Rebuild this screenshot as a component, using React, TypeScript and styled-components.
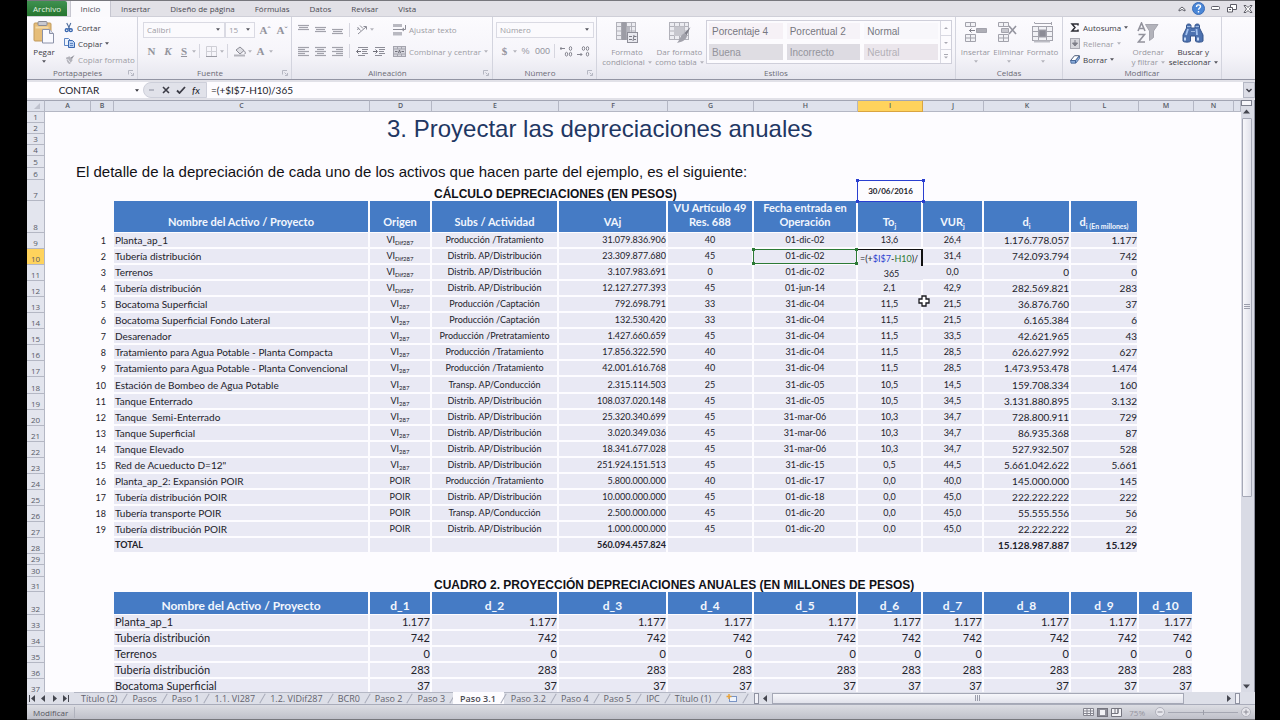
import React from "react";
import styled, { createGlobalStyle, css } from "styled-components";

const UI = `"Open Sans", "Noto Sans", sans-serif`;
const CALC = `Lato, "Open Sans", sans-serif`;
const ARIAL = `"Liberation Sans", Arial, sans-serif`;
const INK = "#22222a";
const MUTED = "#9c9ca4";
const LINE = "#b4b7c4";

const Global = createGlobalStyle`
  *, *::before, *::after { box-sizing: border-box; }
  body { margin: 0; background: #000; font-family: ${UI}; font-size: 8px; color: ${INK}; }
  button, input, select { font: inherit; color: inherit; margin: 0; padding: 0; border: 0; background: none; border-radius: 0; outline: none; }
  svg { display: block; flex: none; }
`;

const Frame = styled.div`
  display: flex;
  flex-direction: column;
  height: 100vh;
  margin: 0 25px 0 27px;
  background: #e1e1e8;
  border-top: 1px solid #77777d;
  border-bottom: 1px solid #77777d;
  overflow: hidden;
`;

/* ---------- ribbon tabs ---------- */

const TabStrip = styled.nav`
  display: flex;
  align-items: stretch;
  height: 16px;
  flex: none;
  background: #e2e1e7;
  border-bottom: 1px solid #cfcfd8;
`;

const RibbonTab = styled.button<{ $kind?: "file" | "active" }>`
  padding: 0 10px;
  color: #4a4a52;
  line-height: 14px;
  ${(p) =>
    p.$kind === "file" &&
    css`
      padding: 0 5px;
      margin-right: 3px;
      min-width: 40px;
      color: #e3f3e0;
      background: linear-gradient(#3f9150, #26752f);
      border-radius: 0 2px 0 0;
    `}
  ${(p) =>
    p.$kind === "active" &&
    css`
      background: #fbfafd;
      border: 1px solid #c6c6d0;
      border-width: 0 1px;
      margin-bottom: -1px;
      min-width: 41px;
      padding: 0 9px 1px;
    `}
`;

const WindowButtons = styled.div`
  display: flex;
  align-items: center;
  gap: 6px;
  margin-left: auto;
  padding-right: 2px;
`;

const PlainButton = styled.button`
  display: flex;
  align-items: center;
  justify-content: center;
`;

/* ---------- ribbon ---------- */

const Ribbon = styled.div`
  display: flex;
  flex: none;
  height: 63px;
  background: linear-gradient(#fcfbfe, #f6f5fa 60%, #e6e6ee);
  border-bottom: 1px solid #9294a3;
`;

const Group = styled.section<{ $w: number }>`
  display: flex;
  flex-direction: column;
  flex: 0 0 ${(p) => p.$w}px;
  padding-top: 2px;
  border-right: 1px solid #d3d4de;
`;

const GroupBody = styled.div<{ $pad?: number }>`
  display: flex;
  height: 48px;
  padding-left: ${(p) => p.$pad ?? 4}px;
`;

const GroupLabel = styled.div`
  display: flex;
  align-items: center;
  height: 11px;
  color: #6b6b75;
  span { flex: 1; text-align: center; }
  svg { margin-right: 3px; }
`;

const Stack = styled.div<{ $pad?: number }>`
  display: flex;
  flex-direction: column;
  padding-left: ${(p) => p.$pad ?? 0}px;
`;

const SmallButton = styled.button<{ $off?: boolean }>`
  display: flex;
  align-items: center;
  gap: 3px;
  height: 16px;
  white-space: nowrap;
  color: ${(p) => (p.$off ? MUTED : "#3c3c44")};
`;

const BigButton = styled.button<{ $w: number; $off?: boolean }>`
  display: flex;
  flex-direction: column;
  align-items: center;
  width: ${(p) => p.$w}px;
  padding-top: 2px;
  line-height: 10px;
  white-space: nowrap;
  color: ${(p) => (p.$off ? "#97979f" : "#3c3c44")};
`;

const IconSlot = styled.span`
  display: flex;
  align-items: center;
  height: 26px;
  padding-bottom: 3px;
`;

const Inline = styled.span`
  display: flex;
  align-items: center;
  justify-content: center;
  gap: 3px;
  min-height: 9px;
`;

const ToolRow = styled.div`
  display: flex;
  align-items: center;
  height: 21px;
  & + & { height: 22px; }
`;

const ToolButton = styled.button<{ $w?: number; $sans?: boolean }>`
  display: flex;
  align-items: center;
  justify-content: center;
  width: ${(p) => p.$w ?? 17}px;
  height: 16px;
  color: #94949d;
  font-family: ${(p) => (p.$sans ? ARIAL : `"Liberation Serif", serif`)};
  font-size: ${(p) => (p.$sans ? 9 : 11)}px;
  font-weight: ${(p) => (p.$sans ? 400 : 700)};
`;

const VRule = styled.i`
  width: 1px;
  height: 14px;
  margin: 0 3px;
  background: #d6d6df;
`;

const SelectBox = styled.label<{ $w: number }>`
  display: flex;
  align-items: center;
  width: ${(p) => p.$w}px;
  height: 16px;
  padding: 0 4px 0 3px;
  border: 1px solid #dadae3;
  background: #fbfafd;
  color: ${MUTED};
  select { appearance: none; flex: 1; min-width: 0; }
`;

const Gallery = styled.div`
  display: flex;
  width: 246px;
  height: 44px;
  margin-top: 1px;
  border: 1px solid #cfcfda;
  background: #fcfbfe;
`;

const Swatches = styled.div`
  display: grid;
  flex: 1;
  grid-template-columns: repeat(3, 1fr);
  grid-auto-rows: 16px;
  gap: 5px 4px;
  padding: 2px;
`;

const Swatch = styled.button<{ $bg: string; $fg: string }>`
  padding-left: 3px;
  text-align: left;
  font-family: ${ARIAL};
  font-size: 10px;
  background: ${(p) => p.$bg};
  color: ${(p) => p.$fg};
`;

const GalleryScroll = styled.div`
  display: grid;
  width: 11px;
  grid-template-rows: repeat(3, 1fr);
  border-left: 1px solid #d9d9e2;
  button + button { border-top: 1px solid #d9d9e2; }
`;

/* ---------- formula bar ---------- */

const FormulaBar = styled.div`
  display: flex;
  flex: none;
  height: 16px;
  margin: 2px 0;
  background: #fdfcff;
  font-family: ${CALC};
  font-size: 10px;
`;

const NameBox = styled.label`
  display: flex;
  align-items: center;
  width: 112px;
  input { flex: 1; min-width: 0; text-align: center; padding-right: 4px; }
`;

const FormulaTools = styled.div`
  display: flex;
  align-items: center;
  gap: 6px;
  width: 64px;
  margin-left: 4px;
  padding-left: 4px;
  background: #e1e2ea;
  border: 1px solid #cdcfda;
  border-radius: 8px 0 0 8px;
`;

const FormulaInput = styled.input`
  flex: 1;
  min-width: 0;
  padding-left: 4px;
`;

const Expand = styled(PlainButton)`
  width: 12px;
  background: #dcdde6;
  border: 1px solid ${LINE};
`;

/* ---------- sheet ---------- */

const Workbook = styled.div`
  display: flex;
  flex: 1;
  min-height: 0;
  background: #fdfcff;
`;

const SheetView = styled.div`
  flex: 1;
  min-width: 0;
  overflow: hidden;
`;

const Grid = styled.table`
  width: 100%;
  table-layout: fixed;
  border-collapse: separate;
  border-spacing: 0;
  font-family: ${CALC};
  font-size: 10px;
  td, th { padding: 0; white-space: nowrap; }
`;

const ColHead = styled.th<{ $on?: boolean }>`
  height: 12px;
  font-family: ${UI};
  font-size: 7px;
  font-weight: 600;
  line-height: 10px;
  color: #565a66;
  background: ${(p) => (p.$on ? "#ffd35c" : "#dfe2ec")};
  border-right: 1px solid ${(p) => (p.$on ? "#d9a441" : LINE)};
  border-top: 1px solid #a2a5b3;
  border-bottom: 1px solid ${(p) => (p.$on ? "#d9a441" : LINE)};
`;

const RowHead = styled.th<{ $on?: boolean }>`
  vertical-align: bottom;
  font-family: ${UI};
  font-size: 8px;
  font-weight: 400;
  line-height: 10px;
  color: #565a66;
  background: ${(p) => (p.$on ? "#ffd35c" : "#e3e5ee")};
  border-right: 1px solid ${LINE};
  border-bottom: 1px solid ${LINE};
`;

const Row = styled.tr<{ $h: number }>`
  height: ${(p) => p.$h}px;
`;

const TitleCell = styled.td`
  padding-left: 17px !important;
  font-family: ${ARIAL};
  font-size: 24px;
  line-height: 30px;
  color: #1f3763;
`;

const IntroCell = styled.td`
  padding-left: 31px !important;
  vertical-align: bottom;
  font-family: ${ARIAL};
  font-size: 15px;
  line-height: 16px;
  color: #111116;
`;

const CaptionCell = styled.td`
  padding-left: 2px !important;
  vertical-align: bottom;
  font-family: ${ARIAL};
  font-size: 12px;
  font-weight: 700;
  line-height: 14px;
  color: #111116;
`;

const HeadCell = styled.th<{ $big?: boolean }>`
  vertical-align: bottom;
  padding-bottom: ${(p) => (p.$big ? 1 : 3)}px !important;
  font-size: ${(p) => (p.$big ? 12 : 11)}px;
  font-weight: 700;
  line-height: 14px;
  color: #f2f6fd;
  background: #457bc5;
  border-right: 2px solid #fdfcff;
  border-bottom: 1px solid #fdfcff;
  sub { font-size: 7px; line-height: 0; }
`;

const Cell = styled.td<{ $a?: "left" | "center" | "right"; $s?: boolean; $b?: boolean; $pos?: boolean; $lg?: boolean }>`
  text-align: ${(p) => p.$a ?? "left"};
  font-size: ${(p) => (p.$s ? 9 : p.$lg ? 11 : 10)}px;
  font-weight: ${(p) => (p.$b ? 700 : 400)};
  line-height: 14px;
  background: #e9e9f4;
  border-right: 2px solid #fdfcff;
  border-bottom: 2px solid #fdfcff;
  ${(p) => (p.$a ?? "left") === "left" && "padding-left: 1px !important;"}
  ${(p) => p.$pos && "position: relative;"}
  sub { font-size: 6px; line-height: 0; vertical-align: -2px; }
`;

const IndexCell = styled.td`
  padding-right: 8px !important;
  text-align: right;
  font-size: 9px;
  line-height: 14px;
`;

const DateCell = styled.td`
  position: relative;
  text-align: center;
  font-size: 8px;
  font-weight: 700;
  line-height: 14px;
`;

const RangeBox = styled.i<{ $c: string }>`
  position: absolute;
  inset: 0 -1px -1px -1px;
  border: 1px solid ${(p) => p.$c};
  &::before, &::after {
    content: "";
    position: absolute;
    top: -2px;
    bottom: -2px;
    width: 3px;
    background:
      linear-gradient(${(p) => p.$c}, ${(p) => p.$c}) top / 3px 3px no-repeat,
      linear-gradient(${(p) => p.$c}, ${(p) => p.$c}) bottom / 3px 3px no-repeat;
  }
  &::before { left: -2px; }
  &::after { right: -2px; }
`;

const CellEditor = styled.div`
  position: absolute;
  z-index: 1;
  inset: 0 -2px auto 0;
  height: 31px;
  padding: 2px 0 0 2px;
  text-align: left;
  line-height: 15px;
  color: ${INK};
  background:
    linear-gradient(#111, #111) top right / 2px 17px no-repeat,
    linear-gradient(#111, #111) top / 100% 1px no-repeat,
    #e9e9f4;
  b { font-weight: 400; color: #2a3fd0; }
  em { font-style: normal; color: #2c7a35; }
  span { display: block; text-align: center; }
`;

const Pointer = styled.svg`
  position: absolute;
  z-index: 2;
  left: -5px;
  top: -2px;
`;

/* ---------- scroll bars ---------- */

const VScroll = styled.div`
  display: flex;
  flex-direction: column;
  align-items: center;
  width: 14px;
  padding-right: 2px;
  background: #d9dbe5;
  border-right: 1px solid #8f92a1;
`;

const SplitBox = styled.i`
  width: 11px;
  height: 6px;
  border: 1px solid #7c7f8e;
  background: #f6f6fb;
`;

const VThumb = styled.div`
  display: flex;
  align-items: center;
  justify-content: center;
  width: 10px;
  height: 64%;
  margin-bottom: auto;
  background: linear-gradient(90deg, #f7f7fb, #e1e2eb);
  border: 1px solid #a5a8b6;
  border-radius: 1px;
`;

const Bottom = styled.div`
  display: flex;
  flex: none;
  height: 13px;
  background: #dddfe8;
  border-bottom: 1px solid #a9acba;
`;

const SheetNav = styled.div`
  display: flex;
  align-items: center;
  width: 47px;
  button { width: 11px; }
`;

const SheetTab = styled.button<{ $on?: boolean }>`
  position: relative;
  display: flex;
  align-items: center;
  padding: 0 8px 0 7px;
  font-size: 9px;
  line-height: 11px;
  white-space: nowrap;
  color: #63636d;
  border-top: 1px solid ${LINE};
  ${(p) => p.$on && "background: #fdfcff; font-weight: 600; color: #4a4a52; border-top-color: #fdfcff;"}
  &::after {
    content: "";
    position: absolute;
    right: 0;
    top: 0;
    width: 1px;
    height: 11px;
    background: #a9acba;
    transform: rotate(30deg);
  }
`;

const HScroll = styled.div`
  display: flex;
  flex: 1;
  align-items: center;
  margin-left: 8px;
  padding-right: 15px;
`;

const HTrack = styled.div`
  flex: 1;
  margin: 0 2px 0 0;
`;

const HThumb = styled.div`
  display: flex;
  align-items: center;
  justify-content: center;
  width: 92%;
  height: 11px;
  background: linear-gradient(#f7f7fb, #e1e2eb);
  border: 1px solid #a5a8b6;
`;

const HSplit = styled.i`
  width: 5px;
  height: 11px;
  border: 1px solid #8f92a1;
  background: #f2f2f8;
`;

const Status = styled.footer`
  display: flex;
  align-items: center;
  flex: none;
  height: 14px;
  padding: 0 4px 0 6px;
  color: #55555f;
  background: linear-gradient(#dcdde3, #bfc0c9);
`;

const StatusRule = styled.i`
  width: 1px;
  height: 11px;
  margin-left: 6px;
  background: #b0b2bd;
`;

const StatusTools = styled.div`
  display: flex;
  align-items: center;
  gap: 3px;
  margin-left: auto;
  color: #94949e;
  label { display: flex; margin: 0 7px 0 4px; }
`;

const Zoom = styled.input`
  appearance: none;
  width: 70px;
  height: 9px;
  background:
    linear-gradient(#9b9da8, #9b9da8) center / 1px 5px no-repeat,
    linear-gradient(#a5a7b2, #a5a7b2) center / 100% 1px no-repeat;
  &::-webkit-slider-thumb { appearance: none; width: 1px; height: 1px; }
`;

/* ---------- icons ---------- */

const Caret = ({ c = "#55555d" }: { c?: string }) => (
  <svg width="4" height="3" viewBox="0 0 5 3"><path d="M0 0h5L2.5 3z" fill={c} /></svg>
);
const Arrow = ({ d, w = 7, h = 7 }: { d: string; w?: number; h?: number }) => (
  <svg width={w} height={h} viewBox="0 0 7 7"><path d={d} fill="#44464f" /></svg>
);
const Launcher = () => (
  <svg width="6" height="6" viewBox="0 0 6 6" fill="none" stroke="#b5b7c2" strokeWidth="1"><path d="M.5 4.500V.5H5M2.500 2.500l2 2M5.500 3v2.500H3" /></svg>
);
const PasteIcon = () => (
  <svg width="22" height="23" viewBox="0 0 22 23">
    <rect x="1" y="2" width="17" height="18" rx="1" fill="#e6bd79" stroke="#c19a5c" />
    <rect x="5" y=".5" width="9" height="4" rx="1" fill="#c9c9d0" stroke="#8b8b95" />
    <path d="M2.500 6.500h13" stroke="#f4d9a5" strokeWidth="2" />
    <path d="M9.500 8.500h7l4 4v9.500h-11z" fill="#fafaff" stroke="#8c92a8" />
    <path d="M16.500 8.500v4h4" fill="#d9dce8" stroke="#8c92a8" />
  </svg>
);
const CutIcon = () => (
  <svg width="10" height="11" viewBox="0 0 11 11" fill="none" stroke="#3a68b0">
    <path d="M3 .5l3.500 7M7.500 .5L4.500 7.500" strokeWidth="1.200" stroke="#4f6e9e" /><circle cx="3" cy="8.500" r="1.600" strokeWidth="1.500" /><circle cx="7.500" cy="8.500" r="1.600" strokeWidth="1.500" />
  </svg>
);
const CopyIcon = () => (
  <svg width="11" height="10" viewBox="0 0 11 10">
    <path d="M.5.5h4l2 2v5h-6z" fill="#eef3fc" stroke="#5e86c4" /><path d="M4.500 2.500h4l2 2v5h-6z" fill="#b9d0f2" stroke="#3a68b0" /><path d="M6 5.500h3M6 7.500h3" stroke="#5e86c4" />
  </svg>
);
const BrushIcon = () => (
  <svg width="11" height="11" viewBox="0 0 12 11"><path d="M11.500.5L7 3.500l1.500 1.800z" fill="#8b8b94" /><path d="M2 3.500l4-1.500 3.500 4-3 4.500c-2-.5-3-2-3.500-4z" fill="#b4b4bc" /><path d="M4 5l3 4M.5 5.500h2.500" stroke="#ececf2" /></svg>
);
const Lines = ({ rows, y = 0 }: { rows: [number, number][]; y?: number }) => (
  <svg width="11" height="11" viewBox="0 0 11 11" fill="none" stroke="#a2a2ab">
    {rows.map(([x, w], i) => <path key={i} d={`M${x} ${y + 1.5 + i * 2}h${w}`} strokeWidth="1.200" />)}
  </svg>
);
const V3: [number, number][] = [[0, 11], [1, 9], [0, 11]];
const BordersIcon = () => (
  <svg width="11" height="11" viewBox="0 0 11 11" fill="none" stroke="#cfcfd6"><path d="M.5.5h10v10H.5zM5.500.5v10M.5 5.500h10" /><path d="M0 10.500h11" stroke="#9a9aa3" /></svg>
);
const BucketIcon = () => (
  <svg width="12" height="11" viewBox="0 0 12 11"><path d="M2 4l4-3 4 3.500-4 3.500z" fill="#dedee4" stroke="#8d8d97" /><path d="M9.500 4.500c2 1 2 2 1.500 3.500" stroke="#8d8d97" fill="none" /><path d="M0 9.500h11" stroke="#b4b4bc" strokeWidth="2" /></svg>
);
const OrientIcon = () => (
  <svg width="12" height="11" viewBox="0 0 12 11" fill="none" stroke="#8d8d97"><path d="M2 10L10 3M7.500 2.500H10.500V5.500" /><path d="M1.500 3l3 3.500M4 1.500l3 3M1 5.500l2-1" /></svg>
);
const IndentIcon = ({ flip }: { flip?: boolean }) => (
  <svg width="12" height="11" viewBox="0 0 12 11" fill="none" stroke="#8d8d97"><path d="M2 1.500h10M6 3.500h6M6 5.500h5M6 7.500h6M2 9.500h7" /><path d={flip ? "M0 5.500h4M2.500 3.500l2 2-2 2" : "M1 5.500h4M2.500 3.500l-2 2 2 2"} stroke="#6f6f79" /></svg>
);
const WrapIcon = () => (
  <svg width="13" height="12" viewBox="0 0 13 12"><path d="M0 0h9v3H0zM0 8h9v3.500H0z" fill="#b9b9c1" /><path d="M0 5.500h10M12.500 1v4.500h-3M11 4l-2 1.500L11 7" fill="none" stroke="#8d8d97" /></svg>
);
const MergeIcon = () => (
  <svg width="13" height="11" viewBox="0 0 13 11"><rect x=".5" y=".5" width="12" height="10" fill="#d6d6dd" stroke="#a4a4ae" /><path d="M1 3h11M1 8h11M4.500 0v3M8.500 0v3M4.500 8v3M8.500 8v3" stroke="#a4a4ae" /><path d="M2 5.500h2.500M8.500 5.500H11M5.500 7l1-3 1 3" stroke="#6f6f79" fill="none" /></svg>
);
const DecimalIcon = ({ out }: { out?: boolean }) => (
  <svg width="13" height="11" viewBox="0 0 13 11" fill="none" stroke="#85858f">
    <ellipse cx="10.500" cy="2.500" rx="1.200" ry="1.900" /><ellipse cx={out ? 10.5 : 6.5} cy="8.200" rx="1.200" ry="1.900" />
    {out ? <ellipse cx="6.500" cy="2.500" rx="1.200" ry="1.900" /> : <ellipse cx="10.500" cy="8.200" rx="1.200" ry="1.900" />}
    <path d={out ? "M0 8.500h5M3.500 7l1.500 1.500L3.500 10" : "M0 2.500h5M1.500 1L0 2.500 1.500 4"} />
  </svg>
);
const TableIcon = ({ brush }: { brush?: boolean }) => (
  <svg width="22" height="22" viewBox="0 0 22 22">
    <rect x=".5" y=".5" width="19" height="17" fill="#ececf1" stroke="#b2b2ba" />
    <path d="M5.500 0v18M10.500 0v18M15.500 0v18M0 4.500h20M0 9H20M0 13.500h20" stroke="#b2b2ba" />
    {brush ? (
      <><path d="M5 4.500h10.500V14H5z" fill="#c6c6cd" /><path d="M21.500 5l-6 6 2 2.500z" fill="#7f7f89" /><path d="M15.500 11l2.500 3c-1 4-5 6-10 7 3-3 3-8 7.500-10z" fill="#a2a2ab" /></>
    ) : (
      <><path d="M5.500 0h5v18h-5z" fill="#9c9ca5" /><path d="M10.500 5h3.500v8h-3.500z" fill="#b8b8c0" /><rect x="11.500" y="10.500" width="10" height="10" fill="#e9e9ef" stroke="#8f8f99" /><path d="M13 14.500h3M13 17.500h3M18 13l-1 6M18 14.500h2.500M18 17.500h2" stroke="#7a7a84" /></>
    )}
  </svg>
);
const CellsIcon = ({ kind }: { kind: "in" | "del" | "fmt" }) => (
  <svg width="24" height="21" viewBox="0 0 24 21" fill="#f2f2f6" stroke="#a3a3ac">
    {kind === "fmt" ? (
      <><path d="M3.500 1v-1M3.500 1.500h17M20.500 0v3" fill="none" /><rect x="1.500" y="4.500" width="20" height="14" /><path d="M1 9.500h21M1 14.500h21M7.500 4v15M15.500 4v15" /><path d="M8 8h7v7H8z" fill="#8c8c96" /><path d="M3 19.500h16" strokeWidth="2" stroke="#bcbcc4" /></>
    ) : (
      <><path d="M1.500.5h10v4h-10zM1.500 12.500h10v7h-10zM6.500.5v4M6.500 12.500v7M1.500 16h10" />
        {kind === "in" ? <><path d="M12.500 6.500h10v4h-10z" fill="#aeaeb6" /><path d="M5 8.500h6M7.500 6.500l-2 2 2 2" stroke="#7f7f89" fill="none" /></> : <><path d="M4.500 6.500h7v4h-7z" fill="#c6c6cd" /><path d="M12 4l7 8M19 4l-7 8" stroke="#94949e" strokeWidth="1.600" /></>}</>
    )}
  </svg>
);
const SigmaIcon = () => (
  <svg width="10" height="9" viewBox="0 0 10 9"><path d="M8 2.500V1H2L5 4.500 2 8h6V6.500" fill="none" stroke="#2c2c34" strokeWidth="1.500" /></svg>
);
const FillIcon = () => (
  <svg width="10" height="11" viewBox="0 0 10 11"><rect x=".5" y=".5" width="9" height="10" fill="#d6d6dc" stroke="#a9a9b2" /><path d="M5 2v5M2.500 5L5 8l2.500-3z" stroke="#7f7f89" fill="#7f7f89" /></svg>
);
const EraserIcon = () => (
  <svg width="10" height="9" viewBox="0 0 10 9"><path d="M.6 5.500L4.500.7h4.900L5.500 5.500z" fill="#fff" stroke="#4a5a78" /><path d="M.6 5.500h4.900v2.700H1zM5.500 5.500l4-4.500v2.500L6 8H5.500z" fill="#88abd9" stroke="#3f5f94" strokeWidth=".8" /></svg>
);
const SortIcon = () => (
  <svg width="22" height="22" viewBox="0 0 22 22" fill="none" stroke="#92929c" strokeWidth="1.600">
    <path d="M8.500 2.500h12.500l-4.500 6.500v6.500l-4 3V9z" fill="#b3b3bb" stroke="#a5a5ae" strokeWidth="1" />
    <path d="M1 9L4.500 1l3.500 8M2.300 6.500h4.400" /><path d="M1.500 12.500h6l-6 7.500h6.500" />
  </svg>
);
const BinocularsIcon = () => (
  <svg width="22" height="20" viewBox="0 0 22 20">
    <path d="M4.500 2.500C4.500.5 9 .5 9 2.500V5h4V2.500c0-2 4.500-2 4.500 0V5l3.500 7v6c0 1.500-7.500 1.500-7.500 0v-5h-5v5c0 1.500-7.500 1.500-7.500 0v-6L4.500 5z" fill="#4d72b0" stroke="#34548c" />
    <path d="M4 12l2-6M14.500 6l.5 6" stroke="#a4c2ee" strokeWidth="1.800" fill="none" />
    <path d="M3 14.500v3M16 14.500v3" stroke="#c3d7f4" strokeWidth="2" />
    <path d="M5 3.500h3.500M13.500 3.500H17M9 8.500h4" stroke="#9db8e0" />
  </svg>
);
const Grip = ({ v }: { v?: boolean }) => (
  <svg width="6" height="6" viewBox="0 0 6 6" stroke="#9a9dab"><path d={v ? "M0 .5h6M0 2.500h6M0 4.500h6" : "M.5 0v6M2.500 0v6M4.500 0v6"} /></svg>
);

/* ---------- data ---------- */

const COLS: [string, number][] = [
  ["A", 46], ["B", 23], ["C", 256], ["D", 62], ["E", 127], ["F", 109], ["G", 86],
  ["H", 104], ["I", 65], ["J", 61], ["K", 87], ["L", 68], ["M", 55], ["N", 40],
];

const DIF = "Dif287";
const VI = "287";
const TR = "Producción /Tratamiento";
const DD = "Distrib. AP/Distribución";
const CA = "Producción /Captación";

const ASSETS: string[][] = [
  ["Planta_ap_1", DIF, TR, "31.079.836.906", "40", "01-dic-02", "13,6", "26,4", "1.176.778.057", "1.177"],
  ["Tubería distribución", DIF, DD, "23.309.877.680", "45", "01-dic-02", "", "31,4", "742.093.794", "742"],
  ["Terrenos", DIF, DD, "3.107.983.691", "0", "01-dic-02", "", "0,0", "0", "0"],
  ["Tubería distribución", DIF, DD, "12.127.277.393", "45", "01-jun-14", "2,1", "42,9", "282.569.821", "283"],
  ["Bocatoma Superficial", VI, CA, "792.698.791", "33", "31-dic-04", "11,5", "21,5", "36.876.760", "37"],
  ["Bocatoma Superficial Fondo Lateral", VI, CA, "132.530.420", "33", "31-dic-04", "11,5", "21,5", "6.165.384", "6"],
  ["Desarenador", VI, "Producción /Pretratamiento", "1.427.660.659", "45", "31-dic-04", "11,5", "33,5", "42.621.965", "43"],
  ["Tratamiento para Agua Potable - Planta Compacta", VI, TR, "17.856.322.590", "40", "31-dic-04", "11,5", "28,5", "626.627.992", "627"],
  ["Tratamiento para Agua Potable - Planta Convencional", VI, TR, "42.001.616.768", "40", "31-dic-04", "11,5", "28,5", "1.473.953.478", "1.474"],
  ["Estación de Bombeo de Agua Potable", VI, "Transp. AP/Conducción", "2.315.114.503", "25", "31-dic-05", "10,5", "14,5", "159.708.334", "160"],
  ["Tanque Enterrado", VI, DD, "108.037.020.148", "45", "31-dic-05", "10,5", "34,5", "3.131.880.895", "3.132"],
  ["Tanque \u00a0Semi-Enterrado", VI, DD, "25.320.340.699", "45", "31-mar-06", "10,3", "34,7", "728.800.911", "729"],
  ["Tanque Superficial", VI, DD, "3.020.349.036", "45", "31-mar-06", "10,3", "34,7", "86.935.368", "87"],
  ["Tanque Elevado", VI, DD, "18.341.677.028", "45", "31-mar-06", "10,3", "34,7", "527.932.507", "528"],
  ["Red de Acueducto D=12\"", VI, DD, "251.924.151.513", "45", "31-dic-15", "0,5", "44,5", "5.661.042.622", "5.661"],
  ["Planta_ap_2: Expansión POIR", "", TR, "5.800.000.000", "40", "01-dic-17", "0,0", "40,0", "145.000.000", "145"],
  ["Tubería distribución POIR", "", DD, "10.000.000.000", "45", "01-dic-18", "0,0", "45,0", "222.222.222", "222"],
  ["Tubería transporte POIR", "", "Transp. AP/Conducción", "2.500.000.000", "45", "01-dic-20", "0,0", "45,0", "55.555.556", "56"],
  ["Tubería distribución POIR", "", DD, "1.000.000.000", "45", "01-dic-20", "0,0", "45,0", "22.222.222", "22"],
];

const YEARS = Array.from({ length: 10 }, (_, i) => `d_${i + 1}`);
const PROJECTION: [string, string][] = [
  ["Planta_ap_1", "1.177"], ["Tubería distribución", "742"], ["Terrenos", "0"],
  ["Tubería distribución", "283"], ["Bocatoma Superficial", "37"],
];

const SHEETS = ["Título (2)", "Pasos", "Paso 1", "1.1. VI287", "1.2. VIDif287", "BCR0", "Paso 2", "Paso 3", "Paso 3.1", "Paso 3.2", "Paso 4", "Paso 5", "IPC", "Título (1)"];

/* ---------- parts ---------- */

const Label = ({ children, launch }: { children: string; launch?: boolean }) => (
  <GroupLabel><span>{children}</span>{launch && <Launcher />}</GroupLabel>
);

const Big = ({ w, off, icon, lines }: { w: number; off?: boolean; icon: React.ReactNode; lines: string[] }) => (
  <BigButton $w={w} $off={off}>
    <IconSlot>{icon}</IconSlot>
    <span>{lines[0]}</span>
    <Inline>{lines[1]}<Caret c={off ? "#b4b4bc" : undefined} /></Inline>
  </BigButton>
);

function RibbonBar() {
  return (
    <Ribbon>
      <Group $w={111}>
        <GroupBody $pad={2}>
          <Big w={30} icon={<PasteIcon />} lines={["Pegar", ""]} />
          <Stack $pad={5}>
            <SmallButton><CutIcon />Cortar</SmallButton>
            <SmallButton><CopyIcon />Copiar <Caret /></SmallButton>
            <SmallButton $off><BrushIcon />Copiar formato</SmallButton>
          </Stack>
        </GroupBody>
        <Label launch>Portapapeles</Label>
      </Group>

      <Group $w={154}>
        <GroupBody $pad={5}>
          <Stack>
            <ToolRow>
              <SelectBox $w={82}><select aria-label="Fuente"><option>Calibri</option></select><Caret /></SelectBox>
              <SelectBox $w={30}><select aria-label="Tamaño"><option>15</option></select><Caret /></SelectBox>
              <ToolButton $w={20}>A<sup>ˆ</sup></ToolButton>
              <ToolButton $w={14}>A<sup>ˇ</sup></ToolButton>
            </ToolRow>
            <ToolRow>
              <ToolButton>N</ToolButton>
              <ToolButton $w={16}><i>K</i></ToolButton>
              <ToolButton $w={16}><u>S</u></ToolButton>
              <Caret c="#b4b4bc" /><VRule />
              <ToolButton><BordersIcon /></ToolButton>
              <Caret c="#b4b4bc" /><VRule />
              <ToolButton><BucketIcon /></ToolButton>
              <Caret c="#b4b4bc" />
              <ToolButton>A</ToolButton>
              <Caret c="#b4b4bc" />
            </ToolRow>
          </Stack>
        </GroupBody>
        <Label launch>Fuente</Label>
      </Group>

      <Group $w={201}>
        <GroupBody $pad={3}>
          <Stack>
            <ToolRow>
              <ToolButton><Lines rows={V3} /></ToolButton>
              <ToolButton><Lines rows={V3} y={2} /></ToolButton>
              <ToolButton><Lines rows={V3} y={4} /></ToolButton>
              <VRule />
              <ToolButton><OrientIcon /></ToolButton>
              <Caret c="#b4b4bc" />
            </ToolRow>
            <ToolRow>
              <ToolButton><Lines rows={[[0, 11], [0, 7], [0, 11], [0, 7], [0, 11]]} /></ToolButton>
              <ToolButton><Lines rows={[[0, 11], [2, 7], [0, 11], [2, 7], [0, 11]]} /></ToolButton>
              <ToolButton><Lines rows={[[0, 11], [4, 7], [0, 11], [4, 7], [0, 11]]} /></ToolButton>
              <VRule />
              <ToolButton><IndentIcon /></ToolButton>
              <ToolButton><IndentIcon flip /></ToolButton>
            </ToolRow>
          </Stack>
          <Stack $pad={6}>
            <ToolRow><SmallButton $off><WrapIcon />Ajustar texto</SmallButton></ToolRow>
            <ToolRow><SmallButton $off><MergeIcon />Combinar y centrar <Caret c="#b4b4bc" /></SmallButton></ToolRow>
          </Stack>
        </GroupBody>
        <Label launch>Alineación</Label>
      </Group>

      <Group $w={104}>
        <GroupBody $pad={3}>
          <Stack>
            <ToolRow><SelectBox $w={98}><select aria-label="Formato de número"><option>Número</option></select><Caret /></SelectBox></ToolRow>
            <ToolRow>
              <ToolButton>$</ToolButton>
              <Caret c="#b4b4bc" />
              <ToolButton $sans>%</ToolButton>
              <ToolButton $sans>000</ToolButton>
              <VRule />
              <ToolButton><DecimalIcon /></ToolButton>
              <ToolButton><DecimalIcon out /></ToolButton>
            </ToolRow>
          </Stack>
        </GroupBody>
        <Label launch>Número</Label>
      </Group>

      <Group $w={359}>
        <GroupBody $pad={4}>
          <Big w={52} off icon={<TableIcon />} lines={["Formato", "condicional"]} />
          <Big w={53} off icon={<TableIcon brush />} lines={["Dar formato", "como tabla"]} />
          <Gallery>
            <Swatches>
              <Swatch $bg="#f6f1f6" $fg="#77777f">Porcentaje 4</Swatch>
              <Swatch $bg="#f6f3f8" $fg="#77777f">Porcentual 2</Swatch>
              <Swatch $bg="#f8f7fb" $fg="#77777f">Normal</Swatch>
              <Swatch $bg="#dfdde3" $fg="#94949c">Buena</Swatch>
              <Swatch $bg="#dddbe2" $fg="#94949c">Incorrecto</Swatch>
              <Swatch $bg="#ebe6ec" $fg="#b3b0b7">Neutral</Swatch>
            </Swatches>
            <GalleryScroll>
              <PlainButton aria-label="Anterior"><svg width="4" height="2" viewBox="0 0 4 2"><path d="M0 2h4L2 0z" fill="#a9a9b2" /></svg></PlainButton>
              <PlainButton aria-label="Siguiente"><svg width="4" height="2" viewBox="0 0 4 2"><path d="M0 0h4L2 2z" fill="#a9a9b2" /></svg></PlainButton>
              <PlainButton aria-label="Más"><svg width="4" height="5" viewBox="0 0 4 5"><path d="M0 0h4v1H0zM0 2.500h4L2 4.500z" fill="#a9a9b2" /></svg></PlainButton>
            </GalleryScroll>
          </Gallery>
        </GroupBody>
        <Label>Estilos</Label>
      </Group>

      <Group $w={107}>
        <GroupBody $pad={3}>
          <Big w={33} off icon={<CellsIcon kind="in" />} lines={["Insertar", ""]} />
          <Big w={33} off icon={<CellsIcon kind="del" />} lines={["Eliminar", ""]} />
          <Big w={35} off icon={<CellsIcon kind="fmt" />} lines={["Formato", ""]} />
        </GroupBody>
        <Label>Celdas</Label>
      </Group>

      <Group $w={159}>
        <GroupBody $pad={7}>
          <Stack>
            <SmallButton><SigmaIcon />Autosuma <Caret /></SmallButton>
            <SmallButton $off><FillIcon />Rellenar <Caret c="#b4b4bc" /></SmallButton>
            <SmallButton><EraserIcon />Borrar <Caret /></SmallButton>
          </Stack>
          <Big w={40} off icon={<SortIcon />} lines={["Ordenar", "y filtrar"]} />
          <Big w={50} icon={<BinocularsIcon />} lines={["Buscar y", "seleccionar"]} />
        </GroupBody>
        <Label>Modificar</Label>
      </Group>
    </Ribbon>
  );
}

const RowNo = ({ n }: { n: number }) => <RowHead scope="row" $on={n === 10}>{n}</RowHead>;

function AssetRow({ row, index }: { row: string[]; index: number }) {
  const [name, vi, sub, vaj, vu, date, to, vur, d, dm] = row;
  const n = index + 9;
  return (
    <Row $h={n === 18 ? 17 : 16}>
      <RowNo n={n} />
      <td />
      <IndexCell>{index + 1}</IndexCell>
      <Cell>{name}</Cell>
      <Cell $a="center" $s>{vi ? <>VI<sub>{vi}</sub></> : "POIR"}</Cell>
      <Cell $a="center" $s>{sub}</Cell>
      <Cell $a="right" $s>{vaj}</Cell>
      <Cell $a="center" $s>{vu}</Cell>
      <Cell $a="center" $s $pos={n === 10}>{date}{n === 10 && <RangeBox $c="#2c7a35" />}</Cell>
      <Cell $a="center" $s $pos={n === 10}>
        {to}
        {n === 10 && (
          <CellEditor role="textbox" aria-label="I10">
            =(+<b>$I$7</b>-<em>H10</em>)/<span>365</span>
          </CellEditor>
        )}
      </Cell>
      <Cell $a="center" $s $pos={n === 13}>
        {vur}
        {n === 13 && (
          <Pointer width="12" height="12" viewBox="0 0 12 12">
            <path d="M4 1h4v3h3v4H8v3H4V8H1V4h3z" fill="#fff" stroke="#1a1a1f" strokeWidth="1.300" />
          </Pointer>
        )}
      </Cell>
      <Cell $a="right">{d}</Cell>
      <Cell $a="right">{dm}</Cell>
    </Row>
  );
}

function Sheet() {
  return (
    <Grid>
      <colgroup>
        <col style={{ width: 18 }} />
        {COLS.map(([c, w]) => <col key={c} style={{ width: w }} />)}
        <col />
      </colgroup>
      <thead>
        <tr>
          <ColHead><svg width="15" height="8" viewBox="0 0 15 8"><path d="M13 1v6H7z" fill="#bfc2ce" /></svg></ColHead>
          {COLS.map(([c]) => <ColHead key={c} scope="col" $on={c === "I"}>{c}</ColHead>)}
          <ColHead />
        </tr>
      </thead>
      <tbody>
        <Row $h={11}><RowNo n={1} /><td colSpan={3} rowSpan={3} /><TitleCell colSpan={8} rowSpan={3}>3. Proyectar las depreciaciones anuales</TitleCell></Row>
        <Row $h={11}><RowNo n={2} /></Row>
        <Row $h={11}><RowNo n={3} /></Row>
        <Row $h={11}><RowNo n={4} /></Row>
        <Row $h={12}><RowNo n={5} /><IntroCell colSpan={14} rowSpan={2}>El detalle de la depreciación de cada uno de los activos que hacen parte del ejemplo, es el siguiente:</IntroCell></Row>
        <Row $h={12}><RowNo n={6} /></Row>
        <Row $h={21}>
          <RowNo n={7} /><td colSpan={4} />
          <CaptionCell colSpan={4}>CÁLCULO DEPRECIACIONES (EN PESOS)</CaptionCell>
          <DateCell>30/06/2016<RangeBox $c="#2a3fd0" /></DateCell>
        </Row>
        <Row $h={32}>
          <RowNo n={8} /><td colSpan={2} />
          <HeadCell>Nombre del Activo / Proyecto</HeadCell>
          <HeadCell>Origen</HeadCell>
          <HeadCell>Subs / Actividad</HeadCell>
          <HeadCell>VAj</HeadCell>
          <HeadCell>VU Artículo 49<br />Res. 688</HeadCell>
          <HeadCell>Fecha entrada en<br />Operación</HeadCell>
          <HeadCell>To<sub>j</sub></HeadCell>
          <HeadCell>VUR<sub>j</sub></HeadCell>
          <HeadCell>d<sub>i</sub></HeadCell>
          <HeadCell>d<sub>i (En millones)</sub></HeadCell>
        </Row>
        {ASSETS.map((row, i) => <AssetRow key={i} row={row} index={i} />)}
        <Row $h={16}>
          <RowNo n={28} /><td colSpan={2} />
          <Cell $b $s>TOTAL</Cell><Cell /><Cell />
          <Cell $a="right" $b $s>560.094.457.824</Cell>
          <Cell /><Cell /><Cell /><Cell />
          <Cell $a="right" $b>15.128.987.887</Cell>
          <Cell $a="right" $b>15.129</Cell>
        </Row>
        <Row $h={11}><RowNo n={29} /></Row>
        <Row $h={12}><RowNo n={30} /></Row>
        <Row $h={15}><RowNo n={31} /><td colSpan={4} /><CaptionCell colSpan={7}>CUADRO 2. PROYECCIÓN DEPRECIACIONES ANUALES (EN MILLONES DE PESOS)</CaptionCell></Row>
        <Row $h={23}>
          <RowNo n={32} /><td colSpan={2} />
          <HeadCell $big>Nombre del Activo / Proyecto</HeadCell>
          {YEARS.map((y) => <HeadCell key={y} $big>{y}</HeadCell>)}
        </Row>
        {PROJECTION.map(([name, value], i) => (
          <Row key={i} $h={16}>
            <RowNo n={33 + i} /><td colSpan={2} />
            <Cell $lg>{name}</Cell>
            {YEARS.map((y) => <Cell key={y} $a="right" $lg>{value}</Cell>)}
          </Row>
        ))}
      </tbody>
    </Grid>
  );
}

export default function App() {
  return (
    <Frame>
      <Global />
      <TabStrip>
        <RibbonTab $kind="file">Archivo</RibbonTab>
        <RibbonTab $kind="active">Inicio</RibbonTab>
        {["Insertar", "Diseño de página", "Fórmulas", "Datos", "Revisar", "Vista"].map((t) => <RibbonTab key={t}>{t}</RibbonTab>)}
        <WindowButtons>
          <PlainButton aria-label="Minimizar cinta"><svg width="8" height="6" viewBox="0 0 8 6"><path d="M1 5V3.500L4 1l3 2.500V5L4 3.500z" fill="#fff" stroke="#5c5c66" /></svg></PlainButton>
          <PlainButton aria-label="Ayuda"><svg width="13" height="13" viewBox="0 0 13 13"><circle cx="6.500" cy="6.500" r="6" fill="#4a86d6" stroke="#3a6cb8" /><path d="M4.500 5c0-3 4-2.500 4-.5 0 1.500-2 1.500-2 3.300M6.500 9v1.400" stroke="#fff" strokeWidth="1.400" fill="none" /></svg></PlainButton>
          <PlainButton aria-label="Minimizar"><svg width="10" height="5" viewBox="0 0 10 5"><rect x=".5" y=".5" width="8" height="3" rx="1" fill="#fff" stroke="#5c5c66" /></svg></PlainButton>
          <PlainButton aria-label="Restaurar"><svg width="10" height="9" viewBox="0 0 10 9" fill="#fff" stroke="#5c5c66"><path d="M3.500.5h6v5h-6z" /><path d="M.5 3.500h5v4.500h-5z" /><path d="M2 5.500h2" /></svg></PlainButton>
          <PlainButton aria-label="Cerrar"><svg width="10" height="8" viewBox="0 0 10 8"><path d="M1 .5h2L5 2.500 7 .5h2L6.500 4 9 7.500H7L5 5.500 3 7.500H1L3.500 4z" fill="#fff" stroke="#5c5c66" /></svg></PlainButton>
        </WindowButtons>
      </TabStrip>

      <RibbonBar />

      <FormulaBar>
        <NameBox><input aria-label="Cuadro de nombres" defaultValue="CONTAR" /><Caret c="#33333b" /></NameBox>
        <FormulaTools>
          <svg width="8" height="8" viewBox="0 0 8 8"><path d="M1 4h5" stroke="#b5b7c3" strokeWidth="2" /></svg>
          <PlainButton aria-label="Cancelar"><svg width="8" height="8" viewBox="0 0 8 8"><path d="M1 1l6 6M7 1L1 7" stroke="#3c3c46" strokeWidth="1.600" /></svg></PlainButton>
          <PlainButton aria-label="Introducir"><svg width="10" height="8" viewBox="0 0 10 8"><path d="M1 4.500L3.500 7 9 1" fill="none" stroke="#3c3c46" strokeWidth="1.800" /></svg></PlainButton>
          <PlainButton aria-label="Insertar función"><i>fx</i></PlainButton>
        </FormulaTools>
        <FormulaInput aria-label="Fórmula" defaultValue="=(+$I$7-H10)/365" />
        <Expand aria-label="Expandir"><svg width="6" height="5" viewBox="0 0 6 5"><path d="M.5 1L3 3.500 5.500 1" fill="none" stroke="#3c3c46" strokeWidth="1.400" /></svg></Expand>
      </FormulaBar>

      <Workbook>
        <SheetView><Sheet /></SheetView>
        <VScroll>
          <SplitBox />
          <PlainButton aria-label="Arriba"><Arrow d="M0 5h7L3.500 1z" h={12} /></PlainButton>
          <VThumb><Grip v /></VThumb>
          <PlainButton aria-label="Abajo"><Arrow d="M0 2h7L3.500 6z" h={12} /></PlainButton>
        </VScroll>
      </Workbook>

      <Bottom>
        <SheetNav>
          <PlainButton aria-label="Primera"><Arrow d="M0 0h1v7H0zM6 0v7L2 3.500z" /></PlainButton>
          <PlainButton aria-label="Anterior"><Arrow d="M5 0v7L1 3.500z" /></PlainButton>
          <PlainButton aria-label="Siguiente"><Arrow d="M2 0v7l4-3.500z" /></PlainButton>
          <PlainButton aria-label="Última"><Arrow d="M6 0h1v7H6zM1 0v7l4-3.500z" /></PlainButton>
        </SheetNav>
        {SHEETS.map((s) => <SheetTab key={s} $on={s === "Paso 3.1"}>{s}</SheetTab>)}
        <SheetTab aria-label="Insertar hoja">
          <svg width="12" height="9" viewBox="0 0 12 9"><rect x="3.500" y="2.500" width="7" height="5" fill="#eef3fc" stroke="#7a94c4" /><path d="M3 0v5M.5 2.500h5" stroke="#e8a33c" strokeWidth="1.500" /></svg>
        </SheetTab>
        <HScroll>
          <HSplit />
          <PlainButton aria-label="Izquierda"><Arrow d="M5 0v7L1 3.500z" w={13} /></PlainButton>
          <HTrack><HThumb><Grip /></HThumb></HTrack>
          <PlainButton aria-label="Derecha"><Arrow d="M2 0v7l4-3.500z" w={13} /></PlainButton>
          <HSplit />
        </HScroll>
      </Bottom>

      <Status>
        <span>Modificar</span>
        <StatusRule />
        <StatusTools>
          <PlainButton aria-label="Normal"><svg width="11" height="8" viewBox="0 0 11 8" fill="#f2f2f6" stroke="#85858f"><path d="M.5.5h10v7H.5zM4 0v8M7.500 0v8M0 3h11M0 5.500h11" /></svg></PlainButton>
          <PlainButton aria-label="Diseño de página"><svg width="11" height="9" viewBox="0 0 11 9"><rect x=".5" y=".5" width="10" height="8" fill="#8d8d97" stroke="#75757f" /><rect x="3" y="2" width="5" height="5" fill="#f2f2f6" /></svg></PlainButton>
          <PlainButton aria-label="Saltos de página"><svg width="11" height="9" viewBox="0 0 11 9"><path d="M.5.5h10v8H.5z" fill="#f2f2f6" stroke="#75757f" /><path d="M4 0v5M7 0v5M0 5.500h7V0" stroke="#75757f" fill="none" /></svg></PlainButton>
          <label htmlFor="zoom">75%</label>
          <PlainButton aria-label="Alejar"><svg width="10" height="10" viewBox="0 0 10 10"><circle cx="5" cy="5" r="4.500" fill="#e6e6ec" stroke="#b0b1bb" /><path d="M2.500 5h5" stroke="#8d8d97" /></svg></PlainButton>
          <Zoom id="zoom" type="range" min="10" max="400" defaultValue="75" />
          <PlainButton aria-label="Acercar"><svg width="10" height="10" viewBox="0 0 10 10"><circle cx="5" cy="5" r="4.500" fill="#e6e6ec" stroke="#b0b1bb" /><path d="M2.500 5h5M5 2.500v5" stroke="#8d8d97" /></svg></PlainButton>
        </StatusTools>
      </Status>
    </Frame>
  );
}
